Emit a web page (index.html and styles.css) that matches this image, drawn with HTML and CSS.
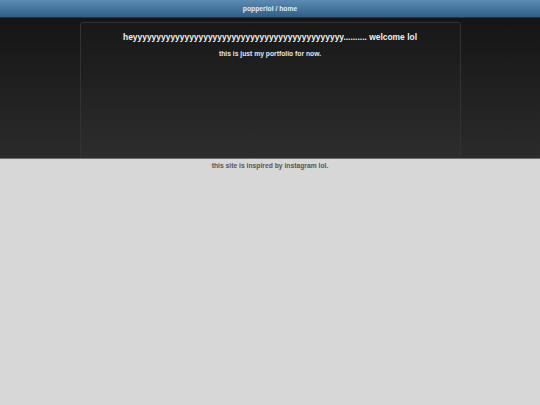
FILE: index.html
```html
<!DOCTYPE html>
<html>
<head>
<meta charset="utf-8">
<link rel="stylesheet" href="styles.css">
</head>
<body>
<header class="topbar">popperlol / home</header>
<main class="stage">
  <section class="card">
    <h1 class="title">heyyyyyyyyyyyyyyyyyyyyyyyyyyyyyyyyyyyyyyyyyyyyy.......... welcome lol</h1>
    <p class="subtitle">this is just my portfolio for now.</p>
  </section>
</main>
<footer class="footer">this site is inspired by instagram lol.</footer>
</body>
</html>
```
FILE: styles.css
```css
html, body {
  margin: 0;
  padding: 0;
}
body {
  background: #d7d7d7;
  font-family: "Liberation Sans", Arial, sans-serif;
  font-weight: bold;
  height: 405px;
  overflow: hidden;
}
.topbar {
  height: 17.5px;
  line-height: 17px;
  text-align: center;
  font-size: 6.75px;
  color: #e4ecf4;
  background: linear-gradient(#5c8cb3, #2f5f88);
  border-bottom: 0.5px solid #1c3550;
  box-sizing: border-box;
}
.stage {
  height: 141px;
  box-sizing: border-box;
  padding-top: 4.5px;
  background: linear-gradient(#151515, #2b2b2b);
  border-bottom: 1px solid #6e6e6e;
  display: flex;
  justify-content: center;
  overflow: hidden;
}
.card {
  width: 381px;
  height: 140px;
  box-sizing: border-box;
  border: 1px solid #323232;
  border-radius: 3px;
  background: rgba(255,255,255,0.01);
  text-align: center;
  padding-top: 8px;
}
.title {
  margin: 0;
  font-size: 8.45px;
  line-height: 12px;
  color: #f0f0f0;
}
.subtitle {
  margin: 6px 0 0;
  font-size: 6.75px;
  line-height: 10px;
  color: #e6e6e6;
}
.footer {
  text-align: center;
  font-size: 6.75px;
  line-height: 13px;
  color: #555;
}
```
